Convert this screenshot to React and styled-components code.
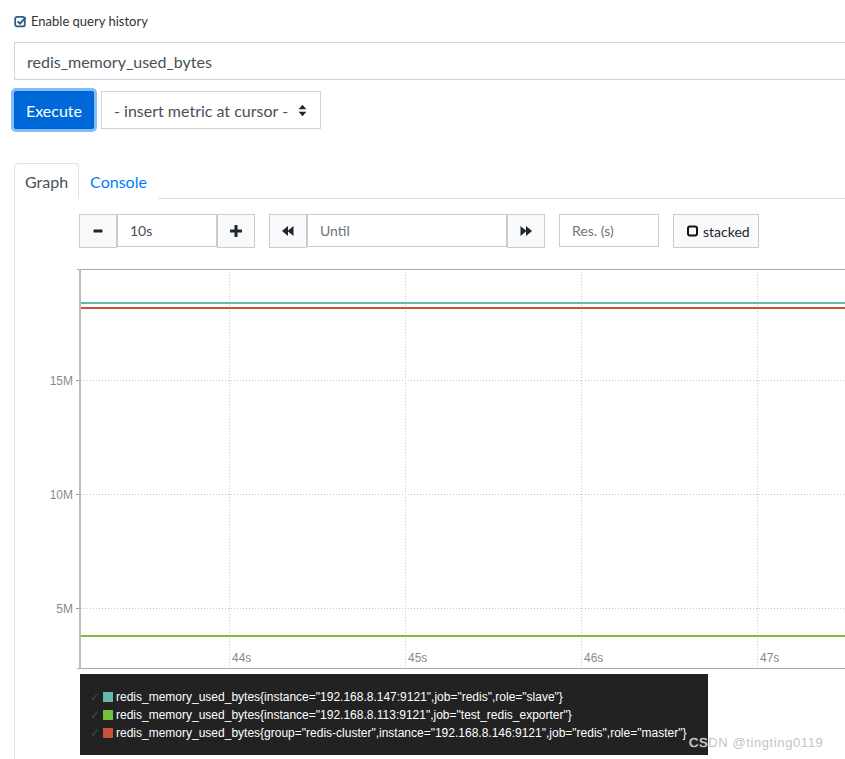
import React from 'react';
import styled, { createGlobalStyle } from 'styled-components';

const GlobalStyle = createGlobalStyle`
  html, body {
    margin: 0;
    padding: 0;
    background: #ffffff;
  }
  body {
    font-family: Lato, "Open Sans", sans-serif;
    color: #212529;
    overflow: hidden;
  }
`;

const series = [
  {
    id: 0,
    color: '#65b9ac',
    y: 41,
    label: 'redis_memory_used_bytes{instance="192.168.8.147:9121",job="redis",role="slave"}',
  },
  {
    id: 1,
    color: '#73c03a',
    y: 374,
    label: 'redis_memory_used_bytes{instance="192.168.8.113:9121",job="test_redis_exporter"}',
  },
  {
    id: 2,
    color: '#cb513a',
    y: 46,
    label: 'redis_memory_used_bytes{group="redis-cluster",instance="192.168.8.146:9121",job="redis",role="master"}',
  },
];

const yTicks = [
  { y: 118, text: '15M' },
  { y: 232, text: '10M' },
  { y: 346, text: '5M' },
];
const xTicks = [
  { x: 214, text: '44s' },
  { x: 390, text: '45s' },
  { x: 566, text: '46s' },
  { x: 742, text: '47s' },
];

function CheckSquareIcon() {
  return (
    <svg width="13" height="13" viewBox="0 0 13 13">
      <rect x="1.2" y="1.8" width="9.6" height="9.6" rx="2" fill="none" stroke="#2b5c8c" strokeWidth="1.8" />
      <path d="M3.6 6.4 L5.9 8.6 L11.6 2.6" fill="none" stroke="#2b5c8c" strokeWidth="2" />
    </svg>
  );
}

function SortIcon() {
  return (
    <svg width="9" height="13" viewBox="0 0 9 13">
      <path d="M4.5 0.8 L8.4 5.3 L0.6 5.3 Z" fill="#212529" />
      <path d="M4.5 12.2 L8.4 7.7 L0.6 7.7 Z" fill="#212529" />
    </svg>
  );
}

function MinusIcon() {
  return (
    <svg width="10" height="12" viewBox="0 0 10 12">
      <rect x="0.5" y="4.5" width="9" height="3" rx="0.5" fill="#212529" />
    </svg>
  );
}

function PlusIcon() {
  return (
    <svg width="12" height="12" viewBox="0 0 12 12">
      <rect x="4.5" y="0" width="3" height="12" rx="0.5" fill="#212529" />
      <rect x="0" y="4.5" width="12" height="3" rx="0.5" fill="#212529" />
    </svg>
  );
}

function BackwardIcon() {
  return (
    <svg width="12" height="10" viewBox="0 0 12 10">
      <path d="M0 5 L6 0 L6 10 Z" fill="#212529" />
      <path d="M5.5 5 L11.5 0 L11.5 10 Z" fill="#212529" />
    </svg>
  );
}

function ForwardIcon() {
  return (
    <svg width="12" height="10" viewBox="0 0 12 10">
      <path d="M12 5 L6 0 L6 10 Z" fill="#212529" />
      <path d="M6.5 5 L0.5 0 L0.5 10 Z" fill="#212529" />
    </svg>
  );
}

function SquareIcon() {
  return (
    <svg width="11" height="12" viewBox="0 0 11 12">
      <rect x="1" y="1.5" width="9" height="9" rx="2" fill="none" stroke="#111" strokeWidth="2" />
    </svg>
  );
}

function Chart() {
  return (
    <ChartSvg width="830" height="410" viewBox="0 0 830 410">
      {/* grid */}
      {yTicks.map(t => (
        <line key={t.text} x1="66" x2="830" y1={t.y + 0.5} y2={t.y + 0.5} stroke="#c8c8c8" strokeDasharray="1 2" />
      ))}
      {xTicks.map(t => (
        <line key={t.text} x1={t.x + 0.5} x2={t.x + 0.5} y1="7" y2="406" stroke="#c8c8c8" strokeDasharray="1 2" />
      ))}
      {/* frame */}
      <line x1="62" x2="830" y1="7.5" y2="7.5" stroke="#a6a6a6" />
      <line x1="62" x2="830" y1="406.5" y2="406.5" stroke="#a6a6a6" />
      <line x1="65" x2="65" y1="7" y2="407" stroke="#bdbdbd" strokeWidth="2" />
      {yTicks.map(t => (
        <g key={t.text}>
          <line x1="61" x2="64" y1={t.y + 0.5} y2={t.y + 0.5} stroke="#999" />
          <AxisText x="58" y={t.y + 4.5} textAnchor="end">{t.text}</AxisText>
        </g>
      ))}
      {xTicks.map(t => (
        <AxisText key={t.text} x={t.x + 3} y="400">{t.text}</AxisText>
      ))}
      {/* series */}
      {series.map(s => (
        <line key={s.id} x1="66" x2="830" y1={s.y} y2={s.y} stroke={s.color} strokeWidth="2" />
      ))}
    </ChartSvg>
  );
}

function App() {
  return (
    <React.Fragment>
      <GlobalStyle />
      <Page>
        <HistoryToggle>
          <CheckSquareIcon />
          <span>Enable query history</span>
        </HistoryToggle>

        <QueryInput defaultValue="redis_memory_used_bytes" />

        <ExecuteRow>
          <ExecuteButton>Execute</ExecuteButton>
          <MetricSelect>
            <span>- insert metric at cursor -</span>
            <SortIcon />
          </MetricSelect>
        </ExecuteRow>

        <TabList>
          <Tab active>Graph</Tab>
          <Tab>Console</Tab>
        </TabList>

        <TabPane>
          <Controls>
            <InputGroup>
              <AddonButton><MinusIcon /></AddonButton>
              <ControlInput width={100} defaultValue="10s" />
              <AddonButton><PlusIcon /></AddonButton>
            </InputGroup>
            <InputGroup>
              <AddonButton><BackwardIcon /></AddonButton>
              <ControlInput width={200} placeholder="Until" />
              <AddonButton><ForwardIcon /></AddonButton>
            </InputGroup>
            <ControlInput width={100} placeholder="Res. (s)" />
            <StackedButton>
              <SquareIcon />
              <span>stacked</span>
            </StackedButton>
          </Controls>

          <Chart />

          <Legend>
            {series.map(s => (
              <LegendRow key={s.id}>
                <LegendCheck>✓</LegendCheck>
                <Swatch color={s.color} />
                <span>{s.label}</span>
              </LegendRow>
            ))}
          </Legend>
        </TabPane>

        <Watermark>CSDN @tingting0119</Watermark>
      </Page>
    </React.Fragment>
  );
}

const Page = styled.div`
  position: relative;
  display: flex;
  flex-direction: column;
  height: 759px;
  overflow: hidden;
  padding: 12px 0 0 14px;
  box-sizing: border-box;
`;

const HistoryToggle = styled.label`
  display: flex;
  align-items: center;
  gap: 4px;
  height: 18px;
  font-size: 13px;
  color: #333;
  margin-bottom: 12px;
`;

const QueryInput = styled.input`
  display: block;
  box-sizing: border-box;
  width: calc(100% + 1px);
  height: 38px;
  flex-shrink: 0;
  padding: 0 12px;
  border: 1px solid #ced4da;
  border-right: none;
  border-radius: 0;
  font-family: inherit;
  font-size: 16px;
  color: #495057;
  outline: none;
`;

const ExecuteRow = styled.div`
  display: flex;
  align-items: center;
  gap: 7px;
  margin-top: 11px;
`;

const ExecuteButton = styled.button`
  width: 80px;
  height: 38px;
  border: 1px solid #0062cc;
  border-radius: 2px;
  background: #0069d9;
  color: #fff;
  font-family: inherit;
  font-size: 16px;
  box-shadow: 0 0 0 3px #80bdff;
  padding: 0;
`;

const MetricSelect = styled.div`
  display: flex;
  align-items: center;
  justify-content: space-between;
  box-sizing: border-box;
  width: 220px;
  height: 38px;
  padding: 0 13px 0 12px;
  border: 1px solid #ced4da;
  font-size: 16px;
  color: #495057;
`;

const TabList = styled.div`
  display: flex;
  margin-top: 34px;
  border-bottom: 1px solid #dee2e6;
`;

const Tab = styled.div`
  box-sizing: border-box;
  height: 36px;
  margin-bottom: -1px;
  padding: 8px 10px 0 10px;
  font-size: 16px;
  color: ${p => (p.active ? '#495057' : '#007bff')};
  background: #fff;
  border: 1px solid ${p => (p.active ? '#dee2e6' : 'transparent')};
  border-bottom-color: ${p => (p.active ? '#fff' : 'transparent')};
  border-radius: 4px 4px 0 0;
`;

const TabPane = styled.div`
  flex: 1;
  border-left: 1px solid #dee2e6;
  padding-top: 15px;
`;

const Controls = styled.div`
  display: flex;
  gap: 14px;
  margin-left: 64px;
  height: 34px;
`;

const InputGroup = styled.div`
  display: flex;
`;

const AddonButton = styled.button`
  display: flex;
  align-items: center;
  justify-content: center;
  width: 38px;
  height: 34px;
  padding: 0;
  border: 1px solid #ccc;
  background: #f8f9fa;
  border-radius: 0;
`;

const ControlInput = styled.input`
  box-sizing: border-box;
  width: ${p => p.width}px;
  height: 33px;
  padding: 0 12px;
  border: 1px solid #ccc;
  font-family: inherit;
  font-size: 14px;
  color: #495057;
  outline: none;
  &::placeholder {
    color: #6c757d;
  }
`;

const StackedButton = styled.button`
  display: flex;
  align-items: center;
  gap: 5px;
  box-sizing: border-box;
  width: 86px;
  height: 34px;
  padding: 0 0 0 13px;
  border: 1px solid #ccc;
  background: #f8f9fa;
  font-family: inherit;
  font-size: 14px;
  color: #212529;
  border-radius: 0;
`;

const ChartSvg = styled.svg`
  display: block;
  margin-top: 14px;
  overflow: visible;
`;

const AxisText = styled.text`
  font-family: "Liberation Sans", Arial, sans-serif;
  font-size: 12px;
  fill: #8a8a8a;
`;

const Legend = styled.div`
  box-sizing: border-box;
  width: 628px;
  margin-left: 65px;
  margin-top: 2px;
  padding: 14px 10px 13px 10px;
  background: #222;
  font-family: "Liberation Sans", Arial, sans-serif;
  font-size: 12px;
  color: #fff;
`;

const LegendRow = styled.div`
  display: flex;
  align-items: center;
  height: 18px;
  white-space: nowrap;
`;

const LegendCheck = styled.span`
  width: 13px;
  color: #2d4d6e;
  font-size: 12px;
`;

const Swatch = styled.span`
  width: 10px;
  height: 10px;
  margin-right: 3px;
  background: ${p => p.color};
`;

const Watermark = styled.div`
  position: absolute;
  left: 689px;
  top: 735px;
  font-family: "Liberation Sans", Arial, sans-serif;
  font-size: 13px;
  color: #c4c4c4;
  text-shadow: 0 0 1px #fff;
  letter-spacing: 0.6px;
`;

export default App;
